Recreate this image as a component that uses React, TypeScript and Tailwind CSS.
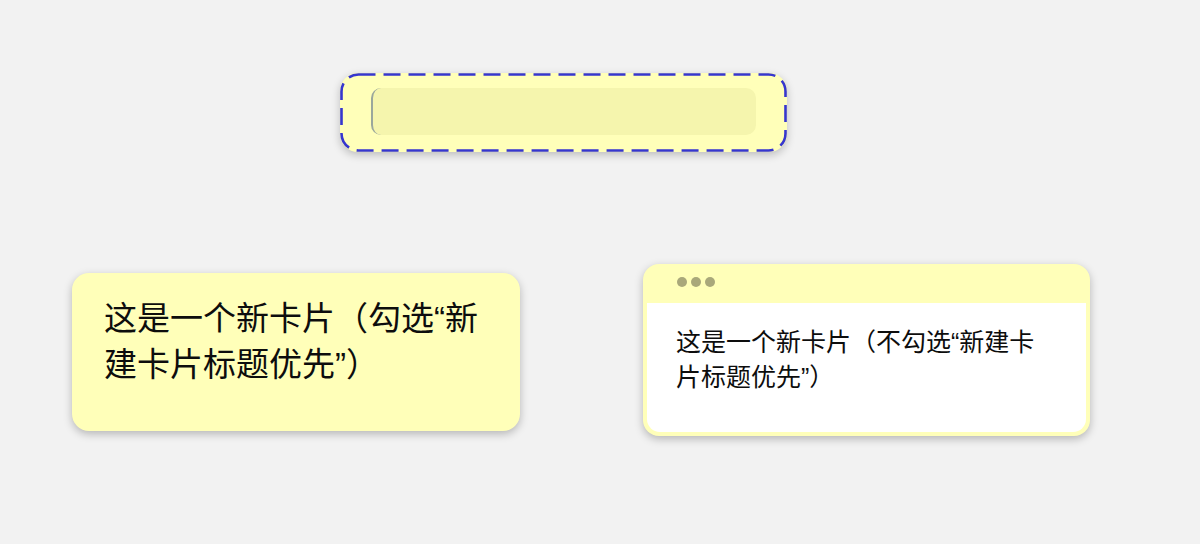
const font = "font-['Liberation_Sans','Noto_Sans_CJK_SC',sans-serif]";

function DashedFrame() {
  return (
    <svg className="pointer-events-none absolute inset-0 h-full w-full" viewBox="0 0 447 79" preserveAspectRatio="none">
      <rect x="1.5" y="1.5" width="444" height="76" rx="17" ry="17" fill="none" stroke="#3636cf" strokeWidth="2.6" strokeDasharray="17 8" />
    </svg>
  );
}

export default function App() {
  return (
    <div className={`flex min-h-[544px] w-[1200px] flex-col bg-[#f2f2f2] pt-[73px] ${font}`}>
      {/* editing card */}
      <div className="relative ml-[340px] h-[79px] w-[447px] rounded-[18px] bg-[#ffffb9] px-[31px] pt-[15px] shadow-[0_3px_8px_rgba(0,0,0,0.22)]">
        <div className="h-[47px] w-full rounded-[10px] border-l-2 border-[#9aa79c] bg-[#f5f5ad]" />
        <DashedFrame />
      </div>

      <div className="mt-[112px] flex items-start pl-[72px]">
        {/* card with title first */}
        <div className="mt-[9px] h-[158px] w-[448px] rounded-[17px] bg-[#ffffb9] px-[32px] pt-[23px] text-[33px] leading-[46px] text-[#0d0d0d] shadow-[0_3px_8px_rgba(0,0,0,0.25)]">
          这是一个新卡片（勾选“新建卡片标题优先”）
        </div>

        {/* card without title first */}
        <div className="ml-[123px] flex h-[172px] w-[447px] flex-col rounded-[16px] bg-[#ffffb9] px-[4px] pb-[4px] shadow-[0_3px_8px_rgba(0,0,0,0.25)]">
          <div className="flex h-[39px] shrink-0 items-center gap-[4px] pl-[30px] pb-[3px]">
            <span className="h-[10px] w-[10px] rounded-full bg-[#a9a87a]" />
            <span className="h-[10px] w-[10px] rounded-full bg-[#a9a87a]" />
            <span className="h-[10px] w-[10px] rounded-full bg-[#a9a87a]" />
          </div>
          <div className="flex-1 rounded-b-[13px] bg-white pl-[29px] pr-[30px] pt-[22px] text-[25px] leading-[35px] text-[#0d0d0d]">
            这是一个新卡片（不勾选“新建卡片标题优先”）
          </div>
        </div>
      </div>
    </div>
  );
}
